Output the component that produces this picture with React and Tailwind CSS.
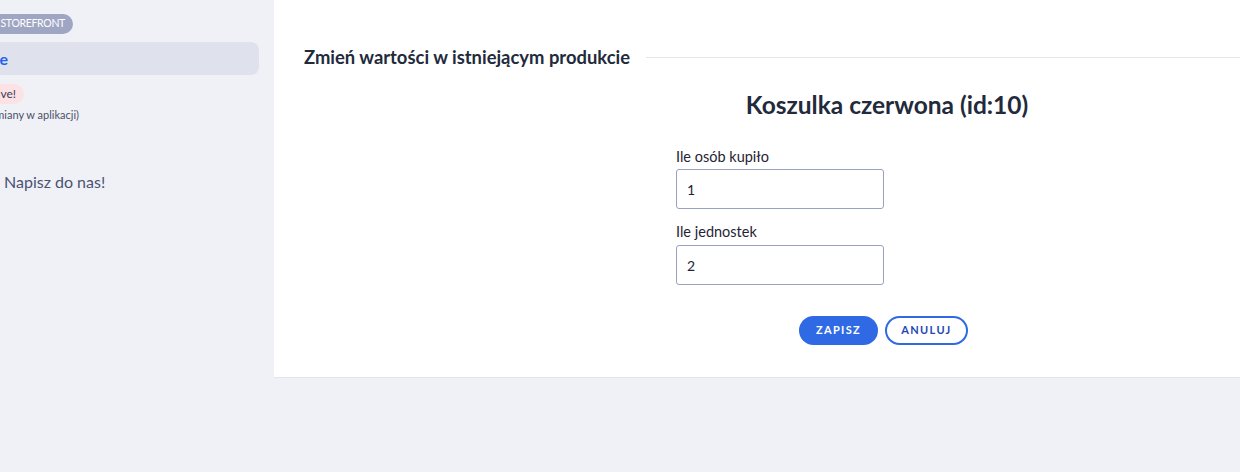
import React from "react";

export default function App() {
  return (
    <div
      className="w-[1240px] h-[472px] overflow-hidden bg-[#f0f1f6] flex items-start"
      style={{ fontFamily: "Lato, 'Noto Sans', sans-serif" }}
    >
      {/* Sidebar (scrolled left, partly cut off) */}
      <aside className="w-[274px] shrink-0 flex flex-col pr-[15px]">
        <div className="mt-[14px] w-[73px] h-[20px] flex justify-end">
          <span className="shrink-0 h-[20px] flex items-center rounded-full bg-[#9fa6c4] text-white text-[10.5px] tracking-[-0.03em] pl-[14px] pr-[8px] whitespace-nowrap">
            STOREFRONT
          </span>
        </div>
        <div className="mt-[8px] h-[33px] rounded-r-lg bg-[#dfe1ed] flex items-center">
          <div className="w-[8px] flex justify-end">
            <span className="shrink-0 whitespace-nowrap text-[16px] font-bold text-[#2563eb]">
              Produkty online
            </span>
          </div>
        </div>
        <div className="mt-[9px] w-[24px] h-[20px] flex justify-end">
          <span className="shrink-0 h-[20px] flex items-center rounded-full bg-[#fde2e5] text-[#3b3f55] text-[12px] pl-[10px] pr-[8px] whitespace-nowrap">
            Live!
          </span>
        </div>
        <div className="mt-[3px] w-[79px] h-[16px] flex justify-end items-center">
          <span className="shrink-0 whitespace-nowrap text-[11px] text-[#4a5068]">
            (zmiany w aplikacji)
          </span>
        </div>
        <div className="mt-[47px] pl-[4px] text-[16px] text-[#4b5374] leading-[24px]">
          Napisz do nas!
        </div>
      </aside>

      {/* Main panel */}
      <main className="w-[1226px] shrink-0 bg-white border-b border-[#e2e4ec] pt-[45px] pb-[32px] px-[30px]">
        <div className="flex items-center h-[24px]">
          <h2 className="text-[18.4px] font-bold text-[#222a3b] whitespace-nowrap leading-[24px]">
            Zmień wartości w istniejącym produkcie
          </h2>
          <div className="flex-1 ml-[16px] h-px bg-[#e5e7eb]" />
        </div>

        <div className="w-[422px] mx-auto">
          <h1 className="mt-[20px] text-center text-[24.5px] font-bold text-[#222a3b] leading-[32px] whitespace-nowrap">
            Koszulka czerwona (id:10)
          </h1>

          <label className="block mt-[26px] text-[14.5px] text-[#1f2433] leading-[20px]">
            Ile osób kupiło
          </label>
          <input
            readOnly
            value="1"
            className="mt-[2px] block w-[208px] h-[40px] rounded-[3px] border border-[#9aa1c0] px-[10px] text-[14px] text-[#1f2433] outline-none"
            style={{ fontFamily: "Lato, 'Noto Sans', sans-serif" }}
          />

          <label className="block mt-[13px] text-[14.5px] text-[#1f2433] leading-[20px]">
            Ile jednostek
          </label>
          <input
            readOnly
            value="2"
            className="mt-[3px] block w-[208px] h-[40px] rounded-[3px] border border-[#9aa1c0] px-[10px] text-[14px] text-[#1f2433] outline-none"
            style={{ fontFamily: "Lato, 'Noto Sans', sans-serif" }}
          />

          <div className="mt-[31px] flex justify-center gap-[7px] pr-[7px]">
            <button className="w-[79px] h-[29px] rounded-full bg-[#2f6ae4] text-white text-[11px] font-bold tracking-[0.12em]">
              ZAPISZ
            </button>
            <button className="w-[83px] h-[29px] rounded-full border-2 border-[#2f6ae4] bg-white text-[#2448b5] text-[11px] font-bold tracking-[0.12em]">
              ANULUJ
            </button>
          </div>
        </div>
      </main>
    </div>
  );
}
